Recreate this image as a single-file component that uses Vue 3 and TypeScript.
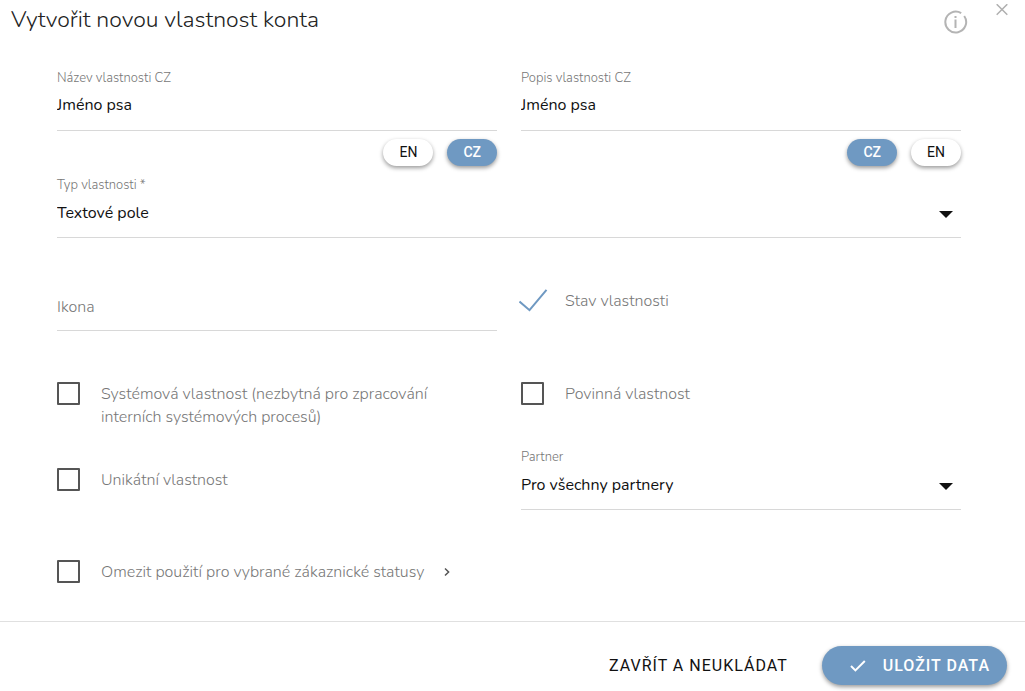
<script setup lang="ts">
import { ref } from 'vue'

type Lang = 'CZ' | 'EN'

const languages: Lang[] = ['CZ', 'EN']
const nameLang = ref<Lang>('CZ')
const descLang = ref<Lang>('CZ')
const names = ref<Record<Lang, string>>({ CZ: 'Jméno psa', EN: '' })
const descriptions = ref<Record<Lang, string>>({ CZ: 'Jméno psa', EN: '' })
const propertyType = ref('text')
const icon = ref('')
const active = ref(true)
const system = ref(false)
const required = ref(false)
const unique = ref(false)
const restricted = ref(false)
const partner = ref('all')
</script>

<template>
  <form class="dialog" @submit.prevent>
    <header class="head">
      <h1>Vytvořit novou vlastnost konta</h1>
      <button type="button" class="icon-button info" aria-label="Nápověda">
        <svg width="24" height="24" viewBox="0 0 24 24" fill="none" stroke="#b4b4b4">
          <path d="M17.2 3.2A10.4 10.4 0 1 0 20.2 6" stroke-width="2" />
          <path d="M11.5 9.5V18M11.5 6v2" stroke-width="2" />
        </svg>
      </button>
      <button type="button" class="icon-button close" aria-label="Zavřít">
        <svg width="12" height="12" viewBox="0 0 12 12" fill="none" stroke="#b0b0b0" stroke-width="1.5">
          <path d="M.7.2 11.3 10.8M11.3.2.7 10.8" />
        </svg>
      </button>
    </header>

    <main class="body">
      <div class="cell">
        <div class="field">
          <label for="name">Název vlastnosti {{ nameLang }}</label>
          <input id="name" v-model="names[nameLang]" type="text" />
        </div>
        <div class="langs reversed">
          <button
            v-for="l in languages"
            :key="l"
            type="button"
            class="pill"
            :class="{ selected: nameLang === l }"
            @click="nameLang = l"
          >{{ l }}</button>
        </div>
      </div>
      <div class="cell">
        <div class="field">
          <label for="desc">Popis vlastnosti {{ descLang }}</label>
          <input id="desc" v-model="descriptions[descLang]" type="text" />
        </div>
        <div class="langs">
          <button
            v-for="l in languages"
            :key="l"
            type="button"
            class="pill"
            :class="{ selected: descLang === l }"
            @click="descLang = l"
          >{{ l }}</button>
        </div>
      </div>

      <div class="field wide type">
        <label for="type">Typ vlastnosti *</label>
        <div class="select">
          <select id="type" v-model="propertyType">
            <option value="text">Textové pole</option>
          </select>
          <svg class="arrow" width="14" height="7" viewBox="0 0 14 7"><path d="M0 0h14L7 7z" fill="#111" /></svg>
        </div>
      </div>

      <div class="field icon-field">
        <input v-model="icon" type="text" placeholder="Ikona" aria-label="Ikona" />
      </div>
      <label class="check status">
        <input v-model="active" type="checkbox" class="tick" />
        <svg v-if="active" class="tick-mark" width="30" height="24" viewBox="0 0 30 24" fill="none" stroke="#6f99c2" stroke-width="2">
          <path d="M.5 12.5 10.5 21.2 27.5 .8" />
        </svg>
        <span>Stav vlastnosti</span>
      </label>

      <label class="check system">
        <input v-model="system" type="checkbox" />
        <span>Systémová vlastnost (nezbytná pro zpracování interních systémových procesů)</span>
      </label>
      <label class="check system">
        <input v-model="required" type="checkbox" />
        <span>Povinná vlastnost</span>
      </label>

      <label class="check unique">
        <input v-model="unique" type="checkbox" />
        <span>Unikátní vlastnost</span>
      </label>
      <div class="field partner">
        <label for="partner">Partner</label>
        <div class="select">
          <select id="partner" v-model="partner">
            <option value="all">Pro všechny partnery</option>
          </select>
          <svg class="arrow" width="14" height="7" viewBox="0 0 14 7"><path d="M0 0h14L7 7z" fill="#111" /></svg>
        </div>
      </div>

      <label class="check restrict wide">
        <input v-model="restricted" type="checkbox" />
        <span>Omezit použití pro vybrané zákaznické statusy</span>
        <svg class="chevron" width="6" height="10" viewBox="0 0 6 10" fill="none" stroke="#555" stroke-width="1.5">
          <path d="M1 1.5 4.6 5 1 8.5" />
        </svg>
      </label>
    </main>

    <footer class="foot">
      <button type="button" class="plain">ZAVŘÍT A NEUKLÁDAT</button>
      <button type="submit" class="save">
        <svg width="16" height="12" viewBox="0 0 16 12" fill="none" stroke="#fff" stroke-width="2">
          <path d="M1 6 5.4 10.4 14.8 1" />
        </svg>
        ULOŽIT DATA
      </button>
    </footer>
  </form>
</template>

<style>
body {
  background: #fff;
}
</style>

<style scoped>
.dialog {
  font-family: Nunito, "Open Sans", sans-serif;
  font-size: 16px;
  font-weight: 300;
  color: #111;
}

button,
input,
select {
  font: inherit;
  color: inherit;
  margin: 0;
}

button {
  border: 0;
  cursor: pointer;
}

.head {
  display: flex;
  align-items: flex-start;
  padding: 4px 17px 0 11px;
}

h1 {
  flex: 1;
  margin: 0;
  font-size: 23px;
  line-height: 32px;
  font-weight: 300;
  color: #222;
}

.icon-button {
  display: flex;
  padding: 0;
  background: none;
}

.info {
  margin: 6px 28px 0 0;
}

.body {
  display: grid;
  grid-template-columns: 1fr 1fr;
  column-gap: 24px;
  align-items: start;
  padding: 34px 64px 37px 57px;
}

.wide {
  grid-column: 1 / -1;
}

.field label {
  display: block;
  font-size: 13px;
  line-height: 16px;
  color: #777;
}

.field input,
.field select {
  display: block;
  box-sizing: border-box;
  width: 100%;
  height: 45px;
  padding: 0 0 6px;
  border: 0;
  border-bottom: 1px solid #d8d8d8;
  border-radius: 0;
  background: none;
  outline: none;
  appearance: none;
  font-weight: 400;
}

.field input::placeholder {
  color: #777;
  font-weight: 300;
  opacity: 1;
}

.select {
  position: relative;
}

.select select {
  padding: 0 32px 4px 0;
}

.select .arrow {
  position: absolute;
  right: 8px;
  top: 18px;
  pointer-events: none;
}

.langs {
  display: flex;
  justify-content: flex-end;
  gap: 14px;
  margin-top: 8px;
}

.reversed {
  flex-direction: row-reverse;
  justify-content: flex-start;
}

.pill {
  height: 27px;
  padding: 0 16px;
  border-radius: 14px;
  background: #fff;
  font-family: Roboto, sans-serif;
  font-size: 14px;
  font-weight: 400;
  line-height: 27px;
  box-shadow: 0 2px 4px rgba(0, 0, 0, 0.4);
}

.pill.selected {
  background: #6f99c2;
  color: #fff;
  font-weight: 500;
}

.type {
  margin-top: 11px;
}

.field.icon-field input {
  padding-bottom: 2px;
}

.icon-field {
  margin-top: 48px;
}

.check {
  display: flex;
  align-items: flex-start;
  line-height: 23px;
  color: #777;
}

.check span {
  padding-top: 1px;
}

.check input {
  flex: none;
  box-sizing: border-box;
  width: 23px;
  height: 23px;
  margin: 0 21px 0 0;
  border: 2px solid #555;
  border-radius: 1px;
  appearance: none;
}

.check input:checked {
  background: #6f99c2;
}

.check input.tick:checked {
  border-color: transparent;
  background: none;
}

.status {
  position: relative;
  margin-top: 51px;
}

.tick-mark {
  position: absolute;
  left: -2px;
  top: 0;
}

.system {
  margin-top: 51px;
  padding-right: 48px;
}

.unique {
  margin-top: 39px;
}

.partner {
  margin-top: 20px;
}

.restrict {
  margin-top: 50px;
}

.chevron {
  align-self: center;
  margin-left: 20px;
}

.foot {
  display: flex;
  justify-content: flex-end;
  align-items: center;
  gap: 34px;
  padding: 24px 18px 6px;
  border-top: 1px solid #e0e0e0;
  font-family: Roboto, sans-serif;
}

.foot button {
  font-size: 16px;
  font-weight: 400;
  letter-spacing: 1px;
}

.foot .plain {
  padding: 0;
  background: none;
}

.foot .save {
  display: flex;
  align-items: center;
  gap: 17px;
  height: 39px;
  padding: 0 17px 0 28px;
  border-radius: 20px;
  background: #6f99c2;
  color: #fff;
  font-weight: 500;
  box-shadow: 0 2px 4px rgba(0, 0, 0, 0.4);
}
</style>
